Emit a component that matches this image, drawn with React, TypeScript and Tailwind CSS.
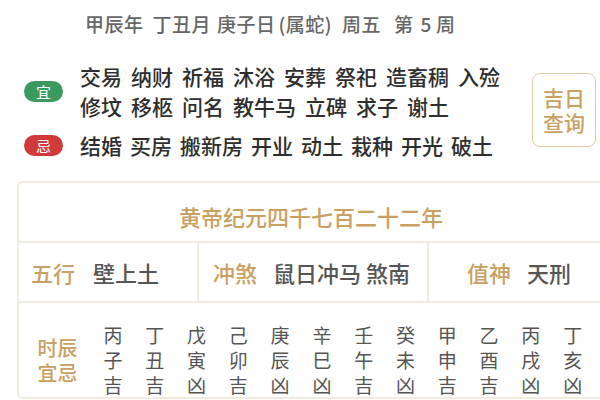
export default function App() {
  const yi1 = ["交易", "纳财", "祈福", "沐浴", "安葬", "祭祀", "造畜稠", "入殓"];
  const yi2 = ["修坟", "移柩", "问名", "教牛马", "立碑", "求子", "谢土"];
  const ji = ["结婚", "买房", "搬新房", "开业", "动土", "栽种", "开光", "破土"];
  const hours = [
    ["丙", "子", "吉"],
    ["丁", "丑", "吉"],
    ["戊", "寅", "凶"],
    ["己", "卯", "吉"],
    ["庚", "辰", "凶"],
    ["辛", "巳", "凶"],
    ["壬", "午", "吉"],
    ["癸", "未", "凶"],
    ["甲", "申", "吉"],
    ["乙", "酉", "吉"],
    ["丙", "戌", "凶"],
    ["丁", "亥", "凶"],
  ];

  return (
    <div className="w-[600px] h-[400px] overflow-hidden bg-white font-['Noto_Sans_CJK_SC',sans-serif]">
      {/* date header */}
      <div className="h-[48px] flex items-center pl-[85px] text-[19px] tracking-[0.5px] text-[#666] font-medium whitespace-pre">
        <span>甲辰年</span>
        <span className="ml-[9px]">丁丑月</span>
        <span className="ml-[6px]">庚子日</span>
        <span className="ml-[3px]">(属蛇)</span>
        <span className="ml-[10px]">周五</span>
        <span className="ml-[13px]">第</span>
        <span className="ml-[7px]">5</span>
        <span className="ml-[4px]">周</span>
      </div>

      {/* 宜 / 忌 */}
      <div className="flex items-start mt-[13px]">
        <div className="flex flex-col w-[518px]">
          <div className="flex items-center">
            <div className="ml-[24px] w-[39px] h-[21px] rounded-full bg-[#3b9a5e] text-white text-[15px] leading-[21px] text-center shrink-0">
              宜
            </div>
            <div className="ml-[17px] text-[21px] leading-[30px] text-[#2e2e2e] font-medium flex flex-col">
              <div className="flex gap-x-[9px]">
                {yi1.map((w, i) => (
                  <span key={i}>{w}</span>
                ))}
              </div>
              <div className="flex gap-x-[9px]">
                {yi2.map((w, i) => (
                  <span key={i}>{w}</span>
                ))}
              </div>
            </div>
          </div>
          <div className="flex items-center mt-[9px]">
            <div className="ml-[24px] w-[39px] h-[21px] rounded-full bg-[#d13a3b] text-white text-[15px] leading-[21px] text-center shrink-0">
              忌
            </div>
            <div className="ml-[17px] text-[21px] leading-[30px] text-[#2e2e2e] font-medium flex gap-x-[8px]">
              {ji.map((w, i) => (
                <span key={i}>{w}</span>
              ))}
            </div>
          </div>
        </div>
        <div className="ml-[14px] mt-[12px] w-[64px] h-[74px] rounded-[8px] border border-[#dccaa3] flex flex-col items-center justify-center text-[21px] leading-[25px] font-medium text-[#c9a062]">
          <span>吉日</span>
          <span>查询</span>
        </div>
      </div>

      {/* almanac card */}
      <div className="ml-[17px] mt-[21px] w-[588px] rounded-[6px] border-2 border-[#f1ebdf]">
        <div className="h-[58px] flex items-center justify-center pt-[8px] text-[22px] font-medium text-[#c9a062]">
          黄帝纪元四千七百二十二年
        </div>
        <div className="h-[60px] flex border-t-2 border-[#f1ebdf] text-[22px] font-medium">
          <div className="w-[178px] flex items-center pl-[12px] gap-[18px]">
            <span className="text-[#c9a062]">五行</span>
            <span className="text-[#555]">壁上土</span>
          </div>
          <div className="w-[230px] flex items-center pl-[14px] gap-[16px] border-l-2 border-[#f1ebdf]">
            <span className="text-[#c9a062]">冲煞</span>
            <span className="text-[#555] whitespace-pre">鼠日冲马 煞南</span>
          </div>
          <div className="flex-1 flex items-center pl-[38px] gap-[16px] border-l-2 border-[#f1ebdf]">
            <span className="text-[#c9a062]">值神</span>
            <span className="text-[#555]">天刑</span>
          </div>
        </div>
        <div className="flex border-t-2 border-[#f1ebdf] pt-[19px]">
          <div className="w-[73px] flex flex-col items-center justify-center text-[20px] leading-[25px] font-medium text-[#c9a062] pl-[4px]">
            <span>时辰</span>
            <span>宜忌</span>
          </div>
          <div className="flex">
            {hours.map((h, i) => (
              <div key={i} className="w-[41.8px] flex flex-col items-center text-[19px] leading-[25px] text-[#555]">
                {h.map((c, j) => (
                  <span key={j}>{c}</span>
                ))}
              </div>
            ))}
          </div>
        </div>
      </div>
    </div>
  );
}
